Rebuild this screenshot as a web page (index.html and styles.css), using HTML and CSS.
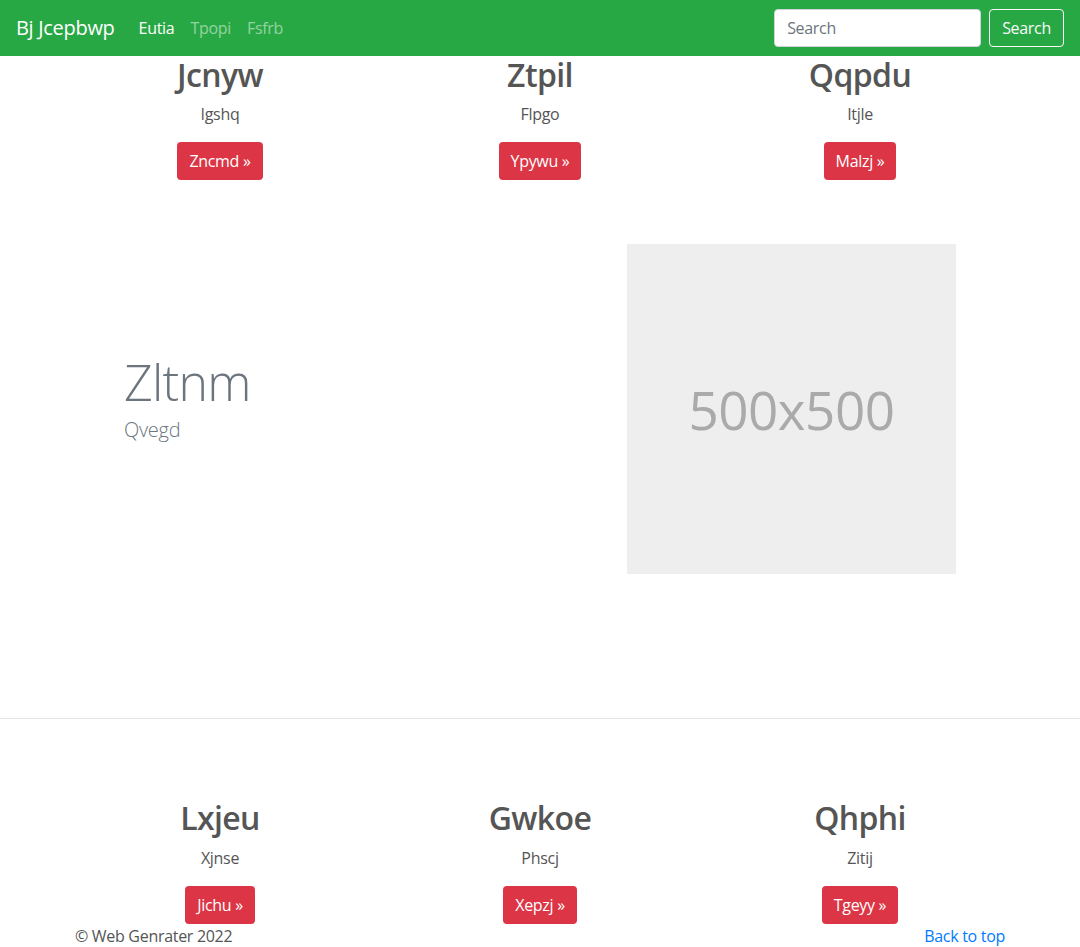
FILE: index.html
```html
<!DOCTYPE html>
<html lang="en">
<head>
<meta charset="utf-8">
<title>Bj Jcepbwp</title>
<link rel="stylesheet" href="styles.css">
</head>
<body>
<nav class="navbar">
  <a class="brand" href="#">Bj Jcepbwp</a>
  <ul class="nav">
    <li><a class="nav-link active" href="#">Eutia</a></li>
    <li><a class="nav-link" href="#">Tpopi</a></li>
    <li><a class="nav-link" href="#">Fsfrb</a></li>
  </ul>
  <form class="search">
    <input class="search-input" type="text" placeholder="Search">
    <button class="search-btn" type="button">Search</button>
  </form>
</nav>
<main>
  <div class="container">
    <div class="row3">
      <div class="col">
        <h2 class="col-title">Jcnyw</h2>
        <p class="col-text">Igshq</p>
        <a class="btn" href="#">Zncmd »</a>
      </div>
      <div class="col">
        <h2 class="col-title">Ztpil</h2>
        <p class="col-text">Flpgo</p>
        <a class="btn" href="#">Ypywu »</a>
      </div>
      <div class="col">
        <h2 class="col-title">Qqpdu</h2>
        <p class="col-text">Itjle</p>
        <a class="btn" href="#">Malzj »</a>
      </div>
    </div>
    <div class="featurette">
      <div class="feat-text">
        <h2 class="feat-heading">Zltnm</h2>
        <p class="lead">Qvegd</p>
      </div>
      <div class="placeholder">500x500</div>
    </div>
  </div>
  <hr class="divider">
  <div class="container">
    <div class="row3">
      <div class="col">
        <h2 class="col-title">Lxjeu</h2>
        <p class="col-text">Xjnse</p>
        <a class="btn" href="#">Jichu »</a>
      </div>
      <div class="col">
        <h2 class="col-title">Gwkoe</h2>
        <p class="col-text">Phscj</p>
        <a class="btn" href="#">Xepzj »</a>
      </div>
      <div class="col">
        <h2 class="col-title">Qhphi</h2>
        <p class="col-text">Zitij</p>
        <a class="btn" href="#">Tgeyy »</a>
      </div>
    </div>
  </div>
</main>
<footer class="footer">
  <p class="copy">© Web Genrater 2022</p>
  <a class="top-link" href="#">Back to top</a>
</footer>
</body>
</html>
```

FILE: styles.css
```css
* { box-sizing: border-box; }
html, body { margin: 0; padding: 0; }
body {
  font-family: "Open Sans", "Noto Sans", "Liberation Sans", sans-serif;
  font-size: 16px;
  line-height: 1.5;
  letter-spacing: -0.3px;
  color: #555;
  background: #fff;
}
a { text-decoration: none; }

.navbar {
  height: 56px;
  background: #28a745;
  display: flex;
  align-items: center;
  padding: 0 16px;
}
.brand {
  color: #fff;
  font-size: 20px;
  line-height: 30px;
  margin-right: 16px;
}
.nav {
  list-style: none;
  margin: 0;
  padding: 0;
  display: flex;
  flex: 1;
}
.nav-link {
  display: block;
  padding: 8px;
  color: rgba(255,255,255,.5);
}
.nav-link.active { color: #fff; }
.search { display: flex; align-items: center; }
.search-input {
  width: 207px;
  height: 38px;
  padding: 6px 12px;
  font: inherit;
  letter-spacing: -0.3px;
  color: #495057;
  border: 1px solid #ced4da;
  border-radius: 4px;
  margin-right: 8px;
  background: #fff;
}
.search-input::placeholder { color: #6c757d; }
.search-btn {
  height: 38px;
  padding: 6px 12px;
  font: inherit;
  letter-spacing: -0.3px;
  color: #f8f9fa;
  background: transparent;
  border: 1px solid #f8f9fa;
  border-radius: 4px;
}

.container {
  width: 960px;
  margin: 0 auto;
}
.row3 {
  display: grid;
  grid-template-columns: repeat(3, 1fr);
}
.col {
  text-align: center;
  padding: 0 15px;
}
.col-title {
  font-size: 32px;
  font-weight: 600;
  line-height: 1.2;
  letter-spacing: -0.6px;
  margin: 0 0 8px;
}
.col-text { margin: 0 0 16px; }
.btn {
  display: inline-block;
  height: 38px;
  padding: 6px 12px;
  color: #fff;
  background: #dc3545;
  border-radius: 4px;
  line-height: 26px;
}

.featurette {
  display: flex;
  align-items: center;
  margin: 64px 64px 0;
}
.feat-text { flex: 1; }
.feat-heading {
  font-size: 50px;
  font-weight: 300;
  line-height: 1;
  letter-spacing: -0.8px;
  color: #6c757d;
  margin: 0 0 8px;
}
.lead {
  font-size: 20px;
  font-weight: 300;
  line-height: 30px;
  color: #6c757d;
  margin: 0 0 16px;
}
.placeholder {
  width: 329px;
  height: 330px;
  background: #eee;
  color: #aaa;
  font-size: 53px;
  letter-spacing: -0.5px;
  display: flex;
  align-items: center;
  justify-content: center;
}

.divider {
  margin: 144px 0 80px;
  border: 0;
  border-top: 1px solid rgba(0,0,0,.1);
}

.footer {
  width: 930px;
  margin: 0 auto;
  display: flex;
  justify-content: space-between;
  line-height: 24px;
}
.copy { margin: 0; }
.top-link { color: #007bff; }
```
